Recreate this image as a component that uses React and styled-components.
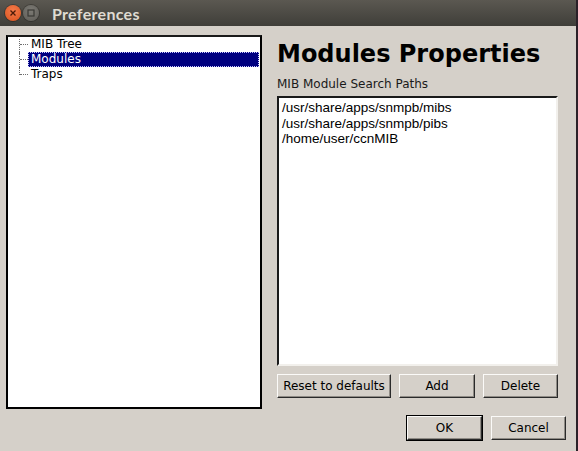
import styled, { createGlobalStyle } from 'styled-components';

const GlobalStyle = createGlobalStyle`
  html, body {
    margin: 0;
    padding: 0;
    background: #d5d0c9;
  }
  body {
    font-family: "DejaVu Sans", sans-serif;
  }
`;

const Window = styled.div`
  width: 576px;
  height: 451px;
  border-right: 2px solid #2b2028;
  background: #d5d0c9;
  display: flex;
  flex-direction: column;
`;

const TitleBar = styled.div`
  height: 26px;
  flex: none;
  display: flex;
  align-items: center;
  padding-left: 5px;
  gap: 2px;
  background: linear-gradient(#5b5851, #3f3e39);
`;

const WinButton = styled.span`
  width: 16px;
  height: 16px;
  border-radius: 50%;
  display: flex;
  align-items: center;
  justify-content: center;
  background: ${(p) => (p.$close ? 'radial-gradient(circle at 50% 35%, #f47a4a, #d9531e)' : 'radial-gradient(circle at 50% 35%, #7c7a74, #5e5c57)')};
  box-shadow: 0 0 0 1px rgba(0, 0, 0, 0.25);
`;

const Title = styled.span`
  margin-left: 11px;
  font-family: Lato, sans-serif;
  font-weight: 700;
  font-size: 16px;
  color: #dfdbd2;
  letter-spacing: 0.3px;
`;

const Content = styled.div`
  flex: 1;
  display: flex;
  flex-direction: column;
  padding: 9px 0 0 6px;
`;

const Main = styled.div`
  display: flex;
  height: 374px;
`;

const TreePanel = styled.div`
  width: 256px;
  box-sizing: border-box;
  border: 2px solid #000;
  border-top-color: #1a1a1a;
  background: #fff;
  padding-right: 1px;
`;

const TreeRow = styled.div`
  position: relative;
  display: flex;
  height: 15px;
  font-size: 12px;
  line-height: 15px;
  color: #000;
`;

const Branch = styled.span`
  position: relative;
  width: 18px;
  margin-left: 11px;
  flex: none;
  &::before {
    content: '';
    position: absolute;
    left: 0;
    top: ${(p) => (p.$first ? '2px' : '0')};
    height: ${(p) => (p.$last ? '8px' : '100%')};
    border-left: 1px dotted #6e6e6e;
  }
  &::after {
    content: '';
    position: absolute;
    left: 1px;
    top: 7px;
    width: 8px;
    border-top: 1px dotted #6e6e6e;
  }
`;

const Label = styled.span`
  flex: 1;
  margin-left: -9px;
  padding-left: 3px;
  box-sizing: border-box;
  background: ${(p) => (p.$selected ? '#000080' : 'transparent')};
  color: ${(p) => (p.$selected ? '#fff' : '#000')};
  outline: ${(p) => (p.$selected ? '1px dotted #c8c8ff' : 'none')};
  outline-offset: -1px;
`;

const Side = styled.div`
  margin-left: 15px;
  width: 281px;
  display: flex;
  flex-direction: column;
`;

const Heading = styled.h1`
  margin: 4px 0 0 0;
  font-size: 24px;
  line-height: 31px;
  font-weight: 700;
  color: #000;
`;

const Caption = styled.div`
  margin-top: 7px;
  font-size: 12px;
  line-height: 15px;
  color: #1a1a1a;
`;

const PathList = styled.div`
  margin-top: 4px;
  height: 270px;
  box-sizing: border-box;
  background: #fff;
  border: 2px solid;
  border-color: #1a1a1a #f2f0ec #f2f0ec #1a1a1a;
  padding: 2px 3px;
  font-family: "Liberation Sans", Arial, sans-serif;
  font-size: 13.5px;
  line-height: 15.7px;
  color: #000;
`;

const ButtonRow = styled.div`
  display: flex;
  justify-content: ${(p) => (p.$end ? 'flex-end' : 'space-between')};
  gap: ${(p) => (p.$end ? '9px' : '0')};
  margin-top: ${(p) => p.$top || '0'};
  padding-right: ${(p) => p.$right || '0'};
`;

const Button = styled.button`
  width: ${(p) => p.$w || 75}px;
  height: 24px;
  box-sizing: border-box;
  font-family: "DejaVu Sans", sans-serif;
  font-size: 12px;
  color: #000;
  background: #d5d0c9;
  border: 1px solid;
  border-color: #fbfaf8 #2a2a2a #2a2a2a #fbfaf8;
  box-shadow: ${(p) => (p.$default ? '0 0 0 1px #000, inset -1px -1px 0 #8f8b85' : 'inset -1px -1px 0 #8f8b85')};
  outline: none;
  padding: 0;
`;

const paths = [
  '/usr/share/apps/snmpb/mibs',
  '/usr/share/apps/snmpb/pibs',
  '/home/user/ccnMIB',
];

const items = ['MIB Tree', 'Modules', 'Traps'];

export default function App() {
  return (
    <>
      <GlobalStyle />
      <Window>
        <TitleBar>
          <WinButton $close>
            <svg width="8" height="8" viewBox="0 0 8 8">
              <path d="M1.5 1.5l5 5M6.5 1.5l-5 5" stroke="#4a1a08" strokeWidth="1.3" />
            </svg>
          </WinButton>
          <WinButton>
            <svg width="8" height="8" viewBox="0 0 8 8">
              <rect x="1" y="1" width="6" height="6" fill="none" stroke="#3a3935" strokeWidth="1.2" />
            </svg>
          </WinButton>
          <Title>Preferences</Title>
        </TitleBar>
        <Content>
          <Main>
            <TreePanel>
              {items.map((item, i) => (
                <TreeRow key={item}>
                  <Branch $first={i === 0} $last={i === items.length - 1} />
                  <Label $selected={item === 'Modules'}>{item}</Label>
                </TreeRow>
              ))}
            </TreePanel>
            <Side>
              <Heading>Modules Properties</Heading>
              <Caption>MIB Module Search Paths</Caption>
              <PathList>
                {paths.map((p) => (
                  <div key={p}>{p}</div>
                ))}
              </PathList>
              <ButtonRow $top="8px">
                <Button $w={114}>Reset to defaults</Button>
                <Button $w={76}>Add</Button>
                <Button $w={75}>Delete</Button>
              </ButtonRow>
            </Side>
          </Main>
          <ButtonRow $end $top="7px" $right="10px">
            <Button $w={75} $default>OK</Button>
            <Button $w={75}>Cancel</Button>
          </ButtonRow>
        </Content>
      </Window>
    </>
  );
}
